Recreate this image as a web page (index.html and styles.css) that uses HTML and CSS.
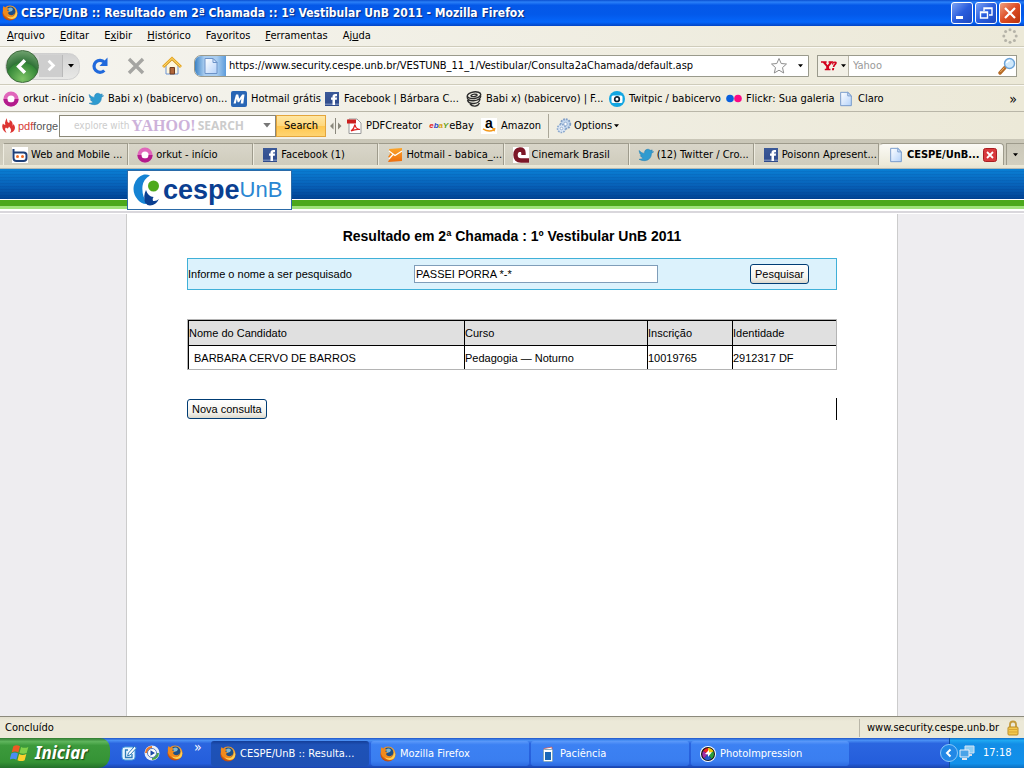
FILE: index.html
```html
<!DOCTYPE html>
<html lang="pt-BR">
<head>
<meta charset="utf-8">
<title>CESPE/UnB :: Resultado em 2ª Chamada :: 1º Vestibular UnB 2011</title>
<link rel="stylesheet" href="styles.css">
</head>
<body>
<svg class="defs" aria-hidden="true">
  <defs>
    <linearGradient id="g-page" x1="0" y1="0" x2="1" y2="1"><stop offset="0" stop-color="#fff"/><stop offset="1" stop-color="#b4d2fa"/></linearGradient>
    <radialGradient id="g-fox" cx=".6" cy=".3" r=".8"><stop offset="0" stop-color="#ffc94a"/><stop offset=".6" stop-color="#ea7a18"/><stop offset="1" stop-color="#a33208"/></radialGradient>
    <linearGradient id="g-fb" x1="0" y1="0" x2="0" y2="1"><stop offset="0" stop-color="#3b5998"/><stop offset="1" stop-color="#2f4b8c"/></linearGradient>
    <linearGradient id="g-mail" x1="0" y1="0" x2="0" y2="1"><stop offset="0" stop-color="#fba62c"/><stop offset="1" stop-color="#ee6c0c"/></linearGradient>
    <symbol id="fox" viewBox="0 0 16 16">
      <circle cx="8" cy="8" r="7.6" fill="url(#g-fox)"/>
      <circle cx="8.4" cy="6.6" r="5" fill="#1d4f86"/>
      <path d="M6 3.5q3-2 5 .5l-1 2-3 1z" fill="#7db7d6"/>
      <path d="M.8 3.5 1.600 1l2.200 2.200q2-.4 2.800.4L5.200 5.400l2.600 1.200L6 7.800q.4 2.400 3.400 2.400 3 0 3.800-3.800Q13 10 10 12q-4 2-7.500-1.500Q.5 8 .8 3.500z" fill="#f08a1c"/>
      <path d="M13.500 4q1.400 4-1.500 7-3 2.300-7 .3 1.400 2.700 5 2.700 5-.5 5.300-5.500z" fill="#ffd04f"/>
    </symbol>
    <symbol id="bird" viewBox="0 0 16 16">
      <path d="M1 3.500q2.500 2.700 5.500 2.900Q6.200 3 9 2.300q2-.4 3.200 1L14.400 3l-1 1.600 2.300.2-2.200 1.500Q13.300 13 7 13.700q-3.500.2-6-1.400 3-.2 4.200-1.400Q3 10.300 2.300 8.600l1.500-.1Q1.300 7 1 3.500z" fill="#2e9bd0" stroke="#1d7cb4" stroke-width=".5"/>
    </symbol>
    <symbol id="fb" viewBox="0 0 16 16">
      <path d="M1 1h14v14H1z" fill="url(#g-fb)"/><path d="M1 12.500h14V14H1z" fill="#6d84b4"/>
      <path d="M8.500 14V8.700H7V6.600h1.500V5.500Q8.600 3 11.200 3H13v2.200h-1.200q-.8 0-.8.8v.6h2l-.2 2.100H11V14z" fill="#fff"/>
    </symbol>
    <symbol id="sheet" viewBox="0 0 16 18">
      <path d="M2 1.500h8L14 5.500v11H2z" fill="url(#g-page)" stroke="#6c93c8"/><path d="M10 1.500v4h4z" fill="#dceaff" stroke="#6c93c8"/>
    </symbol>
    <symbol id="orkut" viewBox="0 0 16 16">
      <circle cx="8" cy="8" r="5.600" fill="#fff" stroke="#e067bb" stroke-width="4"/>
      <path d="M2.400 8a5.600 5.600 0 0 0 11.200 0" fill="none" stroke="#b31c8c" stroke-width="4"/>
    </symbol>
  </defs>
</svg>

<header class="titlebar">
  <svg class="i16"><use href="#fox"/></svg>
  <span class="titlebar-text">CESPE/UnB :: Resultado em 2ª Chamada :: 1º Vestibular UnB 2011 - Mozilla Firefox</span>
  <div class="winbuttons">
    <button aria-label="Minimizar"><svg viewBox="0 0 20 20"><path d="M4 13h7v3H4z" fill="#fff"/></svg></button>
    <button aria-label="Restaurar"><svg viewBox="0 0 20 20"><path d="M8 8V5h8v7h-3M8 5.500h8M4.500 9h7v6h-7zM4 9.500h8" fill="none" stroke="#fff" stroke-width="1.400"/></svg></button>
    <button class="close" aria-label="Fechar"><svg viewBox="0 0 20 20"><path d="m5 5 10 10M15 5 5 15" stroke="#fff" stroke-width="2.200"/></svg></button>
  </div>
</header>

<nav class="menubar">
  <a href="#"><u>A</u>rquivo</a><a href="#"><u>E</u>ditar</a><a href="#">E<u>x</u>ibir</a><a href="#"><u>H</u>istórico</a><a href="#">Fa<u>v</u>oritos</a><a href="#"><u>F</u>erramentas</a><a href="#">Aj<u>u</u>da</a>
  <svg class="throbber" viewBox="0 0 16 16"><g fill="#b5b3a8"><circle cx="8" cy="1.800" r="1.500"/><circle cx="12.400" cy="3.600" r="1.500"/><circle cx="14.200" cy="8" r="1.500"/><circle cx="12.400" cy="12.400" r="1.500"/><circle cx="8" cy="14.200" r="1.500"/><circle cx="3.600" cy="12.400" r="1.500"/><circle cx="1.800" cy="8" r="1.500"/><circle cx="3.600" cy="3.600" r="1.500"/></g></svg>
</nav>

<div class="navbar">
  <div class="backfwd">
    <button class="back" aria-label="Voltar"><svg viewBox="0 0 32 32"><path d="m18.500 9.500-6.500 6.500 6.500 6.500" fill="none" stroke="#fff" stroke-width="3.600"/></svg></button>
    <button class="fwd" aria-label="Avançar"><svg viewBox="0 0 24 22"><path d="m10 6 5 5-5 5" fill="none" stroke="#fff" stroke-width="3"/></svg></button>
    <button class="drop" aria-label="Histórico recente"><svg class="arrow" viewBox="0 0 6 4"><path d="M0 0h6L3 3.500z"/></svg></button>
  </div>
  <button class="tool" aria-label="Recarregar"><svg viewBox="0 0 20 20"><path d="M14.300 14.500a6 6 0 1 1 .2-8.200" fill="none" stroke="#2069dc" stroke-width="3.200"/><path d="M17.500 1.500V10H9.500z" fill="#2069dc"/></svg></button>
  <button class="tool" aria-label="Parar"><svg viewBox="0 0 20 20"><path d="m3 3 14 14M17 3 3 17" stroke="#a5a5a2" stroke-width="3.400"/></svg></button>
  <button class="tool home" aria-label="Página inicial"><svg viewBox="0 0 20 20"><path d="M4 9.500 10 4l6 5.500V18H4z" fill="#fff6dc" stroke="#6b93d4"/><path d="M1 11 10 2.500 19 11" fill="none" stroke="#e5a420" stroke-width="3"/><path d="M1.500 10.500 10 2.500l8.500 8" fill="none" stroke="#ffe07a"/><path d="M8 11.500h4.500V18H8z" fill="#b0663a" stroke="#6e3c22"/></svg></button>
  <div class="urlbox">
    <span class="siteid"><svg class="page-ic"><use href="#sheet"/></svg></span>
    <input class="url" aria-label="Endereço" value="https://www.security.cespe.unb.br/VESTUNB_11_1/Vestibular/Consulta2aChamada/default.asp">
    <svg class="i18" viewBox="0 0 18 18"><path d="m9 1.500 2.200 5 5.300.5-4 3.600 1.200 5.400L9 13.200 4.300 16l1.200-5.400-4-3.600 5.300-.5z" fill="#fdfdfd" stroke="#8e8e8e"/></svg>
    <svg class="arrow small" viewBox="0 0 6 4"><path d="M0 0h6L3 3.500z"/></svg>
  </div>
  <div class="searchbox">
    <button class="engine" aria-label="Mecanismo de busca"><svg class="yahoo" viewBox="0 0 18 12"><path d="M0 1h6v1.500H5l2 2.700 2-2.700H8V1h5v1.500h-1.300L8.500 6.500V9H10v1.500H4V9h1.500V6.500L2 2.500H0z" fill="#d2001c"/><path d="M11.500 4.500Q12 1 15 1.300q3 .5 1 3-1.500 1.300-1.800 2.700h-1.700q.3-2 1.800-3.500.4-1.200-1-.7l-.3 1.700zM12 8.200h2l-.4 2.300h-2z" fill="#d2001c"/></svg><svg class="arrow small" viewBox="0 0 6 4"><path d="M0 0h6L3 3.500z"/></svg></button>
    <input class="find" aria-label="Pesquisar na web" placeholder="Yahoo">
    <svg class="i18" viewBox="0 0 18 18"><path d="m2 16 5-5.500" stroke="#b56a26" stroke-width="3.400" stroke-linecap="round"/><path d="m2.300 15 4-4.300" stroke="#f2b36a"/><circle cx="11.500" cy="6.500" r="5" fill="#cfe8fb" stroke="#6da4d8" stroke-width="1.400"/><path d="M8.500 6q1-2.500 3.500-2.500" fill="none" stroke="#fff" stroke-width="1.400"/></svg>
  </div>
</div>

<nav class="bookmarks">
  <a href="#"><svg class="i16"><use href="#orkut"/></svg>orkut - início</a>
  <a href="#"><svg class="i16"><use href="#bird"/></svg>Babi x) (babicervo) on...</a>
  <a href="#"><svg class="i16" viewBox="0 0 16 16"><rect width="16" height="16" rx="2" fill="#2966b5"/><path d="M2.500 12.500 5 3.500h2.200l1 4.200 3-4.200h2.300l-1.200 9H9.700l.7-4.700L8 11.200H6.700L5.800 8l-1 4.500z" fill="#fff"/></svg>Hotmail grátis</a>
  <a href="#"><svg class="i16"><use href="#fb"/></svg>Facebook | Bárbara C...</a>
  <a href="#"><svg class="i16" viewBox="0 0 16 16"><g fill="none" stroke="#2d2d2d" stroke-width="1.400"><ellipse cx="8" cy="4.200" rx="6.800" ry="3.300" transform="rotate(-8 8 4.200)"/><path d="M11 3.500Q7 2.500 5 4.500q0 1.500 3.500 1 3-.5 2.500-2M1.200 5.500Q1 10 7.500 9.700q7-.5 7.300-5M1.500 9q1 4 6.500 3.500 5.500-.5 6-4.500M4 13q2 2.500 5.500 2 3-.5 4-3"/></g></svg>Babi x) (babicervo) | F...</a>
  <a href="#"><svg class="i16" viewBox="0 0 16 16"><circle cx="8" cy="8" r="8" fill="#12a6e2"/><rect x="2.500" y="4.500" width="11" height="7.500" rx="1.500" fill="#fff"/><circle cx="8" cy="8.200" r="2.300" fill="#fff" stroke="#123" stroke-width="1.700"/></svg>Twitpic / babicervo</a>
  <a href="#"><svg class="i16" viewBox="0 0 16 16"><circle cx="4" cy="7.500" r="3.800" fill="#0a60dc"/><circle cx="12" cy="7.500" r="3.800" fill="#fb0a84"/></svg>Flickr: Sua galeria</a>
  <a href="#"><svg class="i16"><use href="#sheet"/></svg>Claro</a>
  <button class="more" aria-label="Mais favoritos">»</button>
</nav>

<div class="addons">
  <div class="pdfforge"><svg class="flame" viewBox="0 0 14 16"><path d="M5 0Q2 4 3.500 6.500 1.500 7 1 5.500q-2 4 1 7.500 1.500 1.500 2.500 1.800Q2 11 4 9.500q2 2.500 3-1Q9.500 11 9 13l-1 2q4.500-1 5-5 0-2-1.500-4l-.8 2Q11 3 7.500 2q.5 2-.5 3Q4.500 4 5 0z" fill="#dd3432"/></svg><span><b>pdf</b>forge</span></div>
  <div class="ysearch"><span class="explore">explore with</span><span class="ylogo">YAHOO!</span><span class="ysrch">SEARCH</span><svg class="arrow grey" viewBox="0 0 6 4"><path d="M0 0h6L3 3.500z"/></svg></div>
  <button class="gosearch">Search</button>
  <svg class="split" viewBox="0 0 12 16"><path d="M5.500 0v16" stroke="#8a887c"/><path d="M0 8l3.500-3.500v7zM11.500 8 8 4.500v7z" fill="#8a887c"/></svg>
  <a href="#"><svg class="i16" viewBox="0 0 16 16"><path d="M3 1h8l4 4v10.500H3z" fill="#fff" stroke="#999"/><path d="M1 1.500h9v4H1z" fill="#cc1f1f"/><path d="M5 13q3-2 4-6.500Q9.500 11 14 11.500q-4-.8-9 1.500z" fill="none" stroke="#d22" stroke-width="1.200"/></svg>PDFCreator</a>
  <a href="#"><span class="ebay"><i>e</i><i>b</i><i>a</i><i>Y</i></span>eBay</a>
  <a href="#"><span class="amz"><b>a</b><svg viewBox="0 0 14 5"><path d="M1 .8q6 4 11 .8M10 .3l2.700.5-.7 2.500" fill="none" stroke="#f49a1c" stroke-width="1.400"/></svg></span>Amazon</a>
  <a href="#" class="options"><svg class="i16" viewBox="0 0 16 16"><circle cx="9.500" cy="6" r="4.800" fill="#c3d7ee" stroke="#7f9dc6" stroke-width="1.800" stroke-dasharray="1.800 1"/><circle cx="5.500" cy="10.500" r="4" fill="#dce8f6" stroke="#8ba8cd" stroke-width="1.600" stroke-dasharray="1.700 1"/><circle cx="9.500" cy="6" r="1.700" fill="#fff" stroke="#7f9dc6" stroke-width=".7"/><circle cx="5.500" cy="10.500" r="1.300" fill="#fff" stroke="#7f9dc6" stroke-width=".7"/></svg><span>Options</span><svg class="arrow small" viewBox="0 0 6 4"><path d="M0 0h6L3 3.500z"/></svg></a>
</div>

<nav class="tabs">
  <a href="#"><svg class="i16" viewBox="0 0 16 16"><path d="M0 0h16v16H0z" fill="#fff"/><path d="M1.500 2v9q0 3 3 3h7q3 0 3-3V8q0-2.500-3-2.500H1.500" fill="none" stroke="#1e3f78" stroke-width="2"/><circle cx="5.500" cy="9.500" r="1.500" fill="#f26a22"/><circle cx="10.500" cy="9.500" r="1.500" fill="#f26a22"/></svg><span>Web and Mobile ...</span></a>
  <a href="#"><svg class="i16"><use href="#orkut"/></svg><span>orkut - início</span></a>
  <a href="#"><svg class="i16"><use href="#fb"/></svg><span>Facebook (1)</span></a>
  <a href="#"><svg class="i16" viewBox="0 0 16 16"><path d="M2 2 15 1v13L1 15l2-4-2-1 2-3z" fill="url(#g-mail)"/><path d="m2 4 6 4.500L15 4M2 12l4-4.500" fill="none" stroke="#fff" stroke-width="1.200"/></svg><span>Hotmail - babica_...</span></a>
  <a href="#"><svg class="i16" viewBox="0 0 16 16"><path d="M0 0h16v16H0z" fill="#fff"/><path d="M10.500 8V6Q10.500 2.500 7 2.500 2.500 3 2.500 8q0 5.500 5.500 5.500h8" fill="none" stroke="#7c1727" stroke-width="4.400"/></svg><span>Cinemark Brasil</span></a>
  <a href="#"><svg class="i16"><use href="#bird"/></svg><span>(12) Twitter / Cro...</span></a>
  <a href="#"><svg class="i16"><use href="#fb"/></svg><span>Poisonn Apresent...</span></a>
  <a href="#" class="active"><svg class="i16"><use href="#sheet"/></svg><span>CESPE/UnB...</span><svg class="tabclose" viewBox="0 0 14 14"><rect x=".5" y=".5" width="13" height="13" rx="2" fill="#d8393b" stroke="#a81d22"/><path d="m4 4 6 6M10 4l-6 6" stroke="#fff" stroke-width="1.800"/></svg></a>
  <button class="alltabs" aria-label="Listar abas"><svg class="arrow small" viewBox="0 0 6 4"><path d="M0 0h6L3 3.500z"/></svg></button>
</nav>

<main class="viewport">
  <div class="banner">
    <div class="column">
      <a href="#" class="logo"><svg class="mark" viewBox="0 0 28 32"><path d="M17 1.500Q10.500 5 9.500 12 8.500 21 14 30q-5 .5-9-4Q-1 19 1 11 3.500 2.500 11 .5q3.500-.5 6 1z" fill="#1583d3"/><circle cx="20.500" cy="12" r="5.500" fill="#4fa91d"/><path d="M13 16q2 6.500 7.500 7-1.500 2-.5 4 3.500.5 6-2-3 6-9 6.500-3 0-5-3Q10 22 13 16z" fill="#0b3f91"/></svg><span class="cespe">cespe</span><span class="unb">UnB</span></a>
    </div>
  </div>
  <div class="stripes"></div>
  <section class="column sheet">
    <h1>Resultado em 2ª Chamada : 1º Vestibular UnB 2011</h1>
    <form class="query">
      <label for="nome">Informe o nome a ser pesquisado</label>
      <input id="nome" value="PASSEI PORRA *-*">
      <button type="button" class="xpbtn">Pesquisar</button>
    </form>
    <table>
      <thead><tr><th class="c-nome">Nome do Candidato</th><th class="c-curso">Curso</th><th class="c-insc">Inscrição</th><th>Identidade</th></tr></thead>
      <tbody><tr><td class="name">BARBARA CERVO DE BARROS</td><td>Pedagogia — Noturno</td><td>10019765</td><td>2912317 DF</td></tr></tbody>
    </table>
    <div class="again"><button type="button" class="xpbtn">Nova consulta</button></div>
  </section>
</main>

<div class="status">
  <span class="done">Concluído</span>
  <span class="host">www.security.cespe.unb.br<svg class="lock" viewBox="0 0 12 16"><path d="M3 8V4.500Q3 1.500 6 1.500t3 3V8" fill="none" stroke="#c39a3c" stroke-width="1.800"/><rect x="1" y="7" width="10" height="8" rx="1" fill="#f3c84e" stroke="#bb8b24"/><path d="M2 9.500h8M2 12h8" stroke="#d7a534"/></svg></span>
</div>

<footer class="taskbar">
  <button class="start"><svg class="flag" viewBox="0 0 18 18"><path d="M3 3q3-2 6 0L7.500 8.500q-3-1.700-6 0z" fill="#ee5a24"/><path d="M10 3.500q3 1.700 6.500 0L15 9q-3 1.500-6.500 0z" fill="#7fd04a"/><path d="M1.200 9.500q3-1.700 6 0L5.700 15q-3-1.700-6 0z" fill="#4b8df2"/><path d="M8.200 10q3 1.700 6.500 0l-1.500 5.500q-3 1.500-6.500 0z" fill="#fbd02e"/></svg>Iniciar</button>
  <div class="quick">
    <button aria-label="Mostrar área de trabalho"><svg class="i16" viewBox="0 0 16 16"><rect x="1" y="2" width="13" height="13" rx="3" fill="#e8f4ff" stroke="#4aa0dc"/><path d="M7 5H4.500v7.500H11V9" fill="none" stroke="#2b7cb8" stroke-width="1.300"/><path d="m13.500 1.500 2 1.500L9 10l-2.500.8L7.500 8z" fill="#fff" stroke="#2b7cb8"/></svg></button>
    <button aria-label="Media Player"><svg class="i16" viewBox="0 0 16 16"><circle cx="8" cy="8" r="7.500" fill="#e9eef6"/><path d="M1 8a7 7 0 0 1 7-7v3a4 4 0 0 0-4 4z" fill="#e8782c"/><path d="M15 8a7 7 0 0 1-7 7v-3a4 4 0 0 0 4-4z" fill="#4da34a"/><circle cx="8" cy="8" r="4.500" fill="#fff" stroke="#567cc0"/><path d="m6.500 5.200 4.500 2.800-4.500 2.800z" fill="#1c49a5"/></svg></button>
    <button aria-label="Firefox"><svg class="i16"><use href="#fox"/></svg></button>
    <button class="chev" aria-label="Mais">»</button>
  </div>
  <button class="task current"><svg class="i16"><use href="#fox"/></svg>CESPE/UnB :: Resulta...</button>
  <button class="task"><svg class="i16"><use href="#fox"/></svg>Mozilla Firefox</button>
  <button class="task"><svg class="i16" viewBox="0 0 16 16"><path d="m4 2.500 8-1.500v4H4z" fill="#fff" stroke="#c55" stroke-width=".8"/><rect x="3.500" y="3.500" width="9" height="12" rx="1" fill="#fff" stroke="#8ab"/><path d="M5 6h6v8H5z" fill="#1a68b8"/></svg>Paciência</button>
  <button class="task"><svg class="i16" viewBox="0 0 16 16"><circle cx="8" cy="8" r="8" fill="#fff"/><circle cx="8" cy="8" r="7" fill="#111"/><path d="M8 8 3 5q2-3 5-3z" fill="#e22"/><path d="M8 8V2q4 0 5.500 3.500z" fill="#f6c90e"/><path d="m8 8 5.500-2.500Q15 10 11.500 13z" fill="#2b9e3c"/><path d="m8 8 3.500 5Q7 15.500 4 12.500z" fill="#2554c8"/><path d="m8 8-4 4.500Q1 9 3 5z" fill="#a22ba8"/><path d="m5 8 4-4v2.500l3-.5-4 5V8.500z" fill="#fff"/></svg>PhotoImpression</button>
  <div class="tray">
    <button class="collapse" aria-label="Ocultar ícones"><svg viewBox="0 0 16 16"><path d="M9.500 4.500 6 8l3.500 3.500" fill="none" stroke="#fff" stroke-width="2"/></svg></button>
    <svg class="i16" viewBox="0 0 16 16"><path d="M6 1h9v7H6z" fill="#8fd0f6" stroke="#d6e3f2"/><path d="M9 9h4v2H9z" fill="#d6dbe6"/><path d="M1 5h9v7H1z" fill="#4aa3e8" stroke="#e8eef8"/><path d="M3 13h5v2H3z" fill="#e2e6ee"/></svg>
    <time>17:18</time>
  </div>
</footer>
</body>
</html>
```

FILE: styles.css
```css
* { box-sizing: border-box; }
body {
  margin: 0;
  min-height: 100vh;
  display: flex;
  flex-direction: column;
  background: #ece9d8;
  color: #000;
  font: 11px/14px "DejaVu Sans Condensed", "Noto Sans", sans-serif;
  white-space: nowrap;
}
a { color: inherit; text-decoration: none; }
button, input { font: inherit; color: inherit; margin: 0; }
button { border: 0; padding: 0; background: none; }
svg { display: block; flex: none; }
.defs { position: absolute; width: 0; height: 0; }
.i16 { width: 16px; height: 16px; }
.i18 { width: 18px; height: 18px; }
.arrow { width: 6px; height: 4px; }
.arrow.small { width: 5px; }
.arrow.grey { width: 8px; height: 5px; fill: #777; }

/* Window title */
.titlebar {
  height: 26px;
  display: flex;
  align-items: center;
  gap: 3px;
  padding: 0 3px 0 2px;
  background: linear-gradient(#0a4fd0, #2a80f8 8%, #0458e8 20%, #0359ea 55%, #0566fa 85%, #0344c4);
}
.titlebar-text {
  flex: 1;
  color: #fff;
  font: bold 12px/16px "DejaVu Sans Condensed", sans-serif;
  text-shadow: 1px 1px 1px #0a2a80;
}
.winbuttons { display: flex; gap: 2px; }
.winbuttons button {
  width: 22px;
  height: 22px;
  border: 1px solid #fff;
  border-radius: 3px;
  background: linear-gradient(135deg, #7ca2f4, #2a5ddd 50%, #1c48c0);
}
.winbuttons .close { background: linear-gradient(135deg, #f0a080, #dd4c24 50%, #b8320c); }

/* Menus */
.menubar {
  height: 21px;
  display: flex;
  align-items: center;
  gap: 15px;
  padding: 0 6px 0 7px;
  background: linear-gradient(90deg, #f5f4ef, #ece9d8);
  border-bottom: 1px solid #cfccbb;
}
.throbber { width: 16px; height: 16px; margin-left: auto; }

/* Navigation */
.navbar {
  height: 38px;
  display: flex;
  align-items: center;
  padding: 0 7px 0 5px;
  background: linear-gradient(90deg, #f5f4ef, #ece9d8);
  border-top: 1px solid #fbfaf5;
  border-bottom: 1px solid #cfccbb;
}
.backfwd {
  display: flex;
  align-items: center;
  height: 27px;
  width: 75px;
  margin-right: 10px;
  border-radius: 14px 12px 12px 14px;
  border: 1px solid #cfcfcf;
  background: linear-gradient(#d2d2d2, #e8e8e6);
}
.back {
  width: 33px;
  height: 33px;
  flex: none;
  border-radius: 50%;
  border: 1px solid #3e6b3c;
  background: radial-gradient(circle at 50% 90%, #7fc466, #338737 50%, #2f7237 52%, #86b282);
}
.fwd { width: 24px; height: 22px; border-right: 1px solid #b9b9b9; background: #cecece; }
.drop { padding-left: 5px; }
.tool { width: 20px; height: 20px; margin-right: 16px; }
.tool.home { margin-right: 12px; }
.urlbox {
  flex: 1;
  height: 22px;
  margin-right: 8px;
  padding-right: 5px;
  display: flex;
  align-items: center;
  gap: 10px;
  background: #fff;
  border: 1px solid #9a9a8c;
  border-radius: 7px 0 0 7px;
}
.siteid {
  width: 31px;
  height: 20px;
  padding-left: 8px;
  display: flex;
  align-items: center;
  border-radius: 6px 0 0 6px;
  background: linear-gradient(90deg, #3d83c4, #a9cdf0 30%, #a9cdf0 70%, #5b9bdb);
}
.page-ic { width: 16px; height: 18px; }
.url { flex: 1; min-width: 0; border: 0; padding: 0; margin-left: -7px; background: none; }
.searchbox {
  width: 200px;
  height: 22px;
  display: flex;
  align-items: center;
  background: #fff;
  border: 1px solid #9a9a8c;
}
.engine {
  height: 20px;
  width: 31px;
  display: flex;
  align-items: center;
  justify-content: center;
  gap: 3px;
  border-right: 1px solid #b8b5a6;
  background: #f2f0e6;
}
.yahoo { width: 17px; height: 12px; }
.find { flex: 1; min-width: 0; border: 0; padding: 0 4px; background: none; }
.find::placeholder { color: #999; opacity: 1; }

/* Bookmarks */
.bookmarks {
  height: 27px;
  display: grid;
  grid-template-columns: 85px 143px 93px 142px 143px 117px 112px 1fr 12px;
  align-items: center;
  padding: 0 5px 0 3px;
  background: linear-gradient(90deg, #f5f4ef, #ece9d8);
  border-top: 1px solid #fbfaf5;
  border-bottom: 1px solid #b9b6a8;
}
.bookmarks a { display: flex; align-items: center; gap: 4px; }
.more { font-size: 14px; }

/* Add-on toolbar */
.addons {
  height: 27px;
  display: flex;
  align-items: center;
  background: linear-gradient(90deg, #f5f4ef, #ece9d8);
}
.addons a { display: flex; align-items: center; gap: 4px; margin-right: 7px; }
.pdfforge {
  width: 59px;
  height: 26px;
  padding-left: 2px;
  display: flex;
  align-items: center;
  gap: 2px;
  background: #fff;
  color: #555;
  font-family: "Liberation Sans", sans-serif;
}
.pdfforge b { color: #d63a34; font-weight: normal; }
.flame { width: 14px; height: 16px; }
.ysearch {
  width: 217px;
  height: 22px;
  padding: 0 4px 0 14px;
  display: flex;
  align-items: center;
  gap: 2px;
  border: 1px solid #8b8878;
  background: #fff;
  color: #ccc;
}
.explore { font: 10px/14px "DejaVu Sans Condensed", sans-serif; }
.ylogo { color: #cdb2da; font: bold 16px/18px "Liberation Serif", serif; }
.ysrch { font: bold 12px/14px "Open Sans", sans-serif; }
.ysearch .arrow { margin-left: auto; }
.gosearch {
  width: 50px;
  height: 22px;
  border: 1px solid #e3a53c;
  background: linear-gradient(#ffe6a2, #ffd77b 50%, #ffc64f 52%, #ffd572);
}
.split { width: 12px; height: 16px; margin: 0 4px; }
.ebay { width: 16px; font: bold 8px/14px "Liberation Sans", sans-serif; }
.ebay i:nth-child(1) { color: #e02020; }
.ebay i:nth-child(2) { color: #2848c8; }
.ebay i:nth-child(3) { color: #d8a010; }
.ebay i:nth-child(4) { color: #60a010; }
.amz { width: 16px; height: 16px; background: #fff; text-align: center; font: 14px/10px "Liberation Sans", sans-serif; }
.amz b { display: block; }
.amz svg { width: 14px; height: 5px; margin: 0 auto; }
.addons .options { height: 24px; margin: 0; padding-left: 7px; border-left: 1px solid #aaa798; gap: 2px; }

/* Tabs */
.tabs {
  height: 30px;
  display: flex;
  align-items: stretch;
  padding: 4px 0 4px 3px;
  background: linear-gradient(#c9c6b7, #d2cfc0 85%, #ece9d8 86%, #e6e3d2 96%, #8c9aa0);
}
.tabs a {
  flex: 1 1 0;
  min-width: 0;
  display: flex;
  align-items: center;
  gap: 3px;
  padding-left: 8px;
  border: 1px solid #9e9b8c;
  border-bottom: 0;
  border-left-color: #eeece0;
  background: linear-gradient(#d9d6c9, #cfccbd);
}
.tabs a span { overflow: hidden; }
.tabs .active {
  font-weight: bold;
  border-radius: 4px 4px 0 0;
  background: linear-gradient(#fbfaf6, #ece9d8);
}
.tabclose { width: 14px; height: 14px; margin: 0 6px 0 auto; }
.alltabs { width: 18px; margin-left: 2px; display: flex; align-items: center; justify-content: center; border: 1px solid #9e9b8c; border-width: 1px 0 0 1px; }

/* Page */
.viewport {
  flex: 1;
  display: flex;
  flex-direction: column;
  background: #eeedf0;
  font: 11px/14px "Liberation Sans", Arial, sans-serif;
}
.column { width: 100%; max-width: 772px; margin: 0 auto; }
.banner {
  height: 30px;
  background: repeating-linear-gradient(transparent 0 2px, rgba(0, 20, 90, .08) 2px 3px), linear-gradient(#0a7fd4, #0761b8 55%, #004393);
}
.banner .column { padding: 1px; }
.logo {
  position: relative;
  z-index: 1;
  width: 165px;
  height: 40px;
  padding: 0 5px;
  display: flex;
  align-items: center;
  border: 1px solid #2b6ba8;
  background: #fff;
  line-height: 36px;
}
.mark { width: 28px; height: 32px; margin-right: 2px; }
.cespe { color: #0b3f91; font-size: 27px; font-weight: bold; }
.unb { color: #2a86d2; font-size: 22px; }
.stripes {
  height: 15px;
  background: linear-gradient(#fff 0 1px, #4ba81c 1px 7px, #9fe27c 7px 10px, #fff 10px 12px, #d9d7dc 12px 14px, #fff 14px);
}
.sheet {
  flex: 1;
  padding: 14px 60px 40px;
  border: solid #ccc;
  border-width: 0 1px;
  background: #fff;
}
h1 { margin: 0 0 14px; font-size: 14px; line-height: 16px; text-align: center; }
.query {
  height: 32px;
  display: grid;
  grid-template-columns: 226px 1fr 86px;
  align-items: center;
  border: 1px solid #3fb0d8;
  background: #dcf2fc;
}
.query input {
  width: 244px;
  height: 18px;
  padding: 0 1px;
  border: 1px solid #7f9db9;
  background: #fff;
}
.xpbtn {
  justify-self: start;
  height: 20px;
  padding: 0 4px;
  border: 1px solid #003c74;
  border-radius: 3px;
  background: linear-gradient(#fff, #f3f2ec 70%, #dcd8cc);
}
table {
  width: 100%;
  margin: 29px 0 28px;
  table-layout: fixed;
  border-spacing: 0;
  border: 1px solid #b4b4b4;
}
th, td {
  height: 25px;
  padding: 0;
  text-align: left;
  font-weight: normal;
  border: solid #000;
  border-width: 1px 0 0 1px;
}
td { height: 24px; }
th { background: #e0e0e0; }
td.name { padding-left: 5px; }
.c-nome { width: 276px; }
.c-curso { width: 183px; }
.c-insc { width: 85px; }
.again { height: 22px; display: flex; align-items: center; border-right: 1px solid #000; }

/* Status bar */
.status {
  height: 22px;
  display: flex;
  align-items: center;
  justify-content: space-between;
  padding: 0 5px;
  border-top: 1px solid #8c8a7c;
  background: linear-gradient(#e2dfce, #ece9d8 20%);
}
.host { height: 18px; display: flex; align-items: center; gap: 8px; padding-left: 7px; border-left: 1px solid #b9b6a8; }
.lock { width: 12px; height: 16px; }

/* Taskbar */
.taskbar {
  height: 30px;
  display: flex;
  align-items: stretch;
  color: #fff;
  background: linear-gradient(#1f55c8, #4a90f4 8%, #2b66e0 18%, #245ddb 85%, #1a44ac);
}
.start {
  width: 110px;
  padding-left: 10px;
  display: flex;
  align-items: center;
  gap: 5px;
  border-radius: 0 10px 12px 0;
  font: italic bold 17px/22px "Noto Sans", sans-serif;
  text-shadow: 1px 1px 1px #1b4a18;
  background: linear-gradient(#2f7a2f, #5eb55c 12%, #3c9a3c 25%, #359335 80%, #23702a);
}
.flag { width: 20px; height: 20px; }
.quick { width: 101px; padding-left: 11px; display: flex; align-items: center; gap: 7px; }
.chev { align-self: start; margin-left: 4px; font-size: 14px; line-height: 18px; }
.task {
  flex: 0 1 158px;
  height: 25px;
  margin: 3px 2px 0 0;
  padding-left: 9px;
  display: flex;
  align-items: center;
  gap: 4px;
  border-radius: 3px;
  background: linear-gradient(#5c9afa, #3c81f3 15%, #3a7ef0 80%, #2d6ae0);
}
.task.current { background: linear-gradient(#143e98, #1e52b7 15%, #1e50b4); }
.tray {
  margin-left: auto;
  width: 75px;
  display: flex;
  align-items: center;
  background: linear-gradient(#0f6fc8, #1fa8f2 8%, #128de6 20%, #1190ea 85%, #0d6fc0);
  border-left: 1px solid #0b4da0;
}
.collapse { width: 18px; height: 18px; margin: 0 1px 0 -10px; border-radius: 50%; border: 1px solid #8cc8f8; background: #2188e6; }
.tray time { margin-left: 8px; }
```
